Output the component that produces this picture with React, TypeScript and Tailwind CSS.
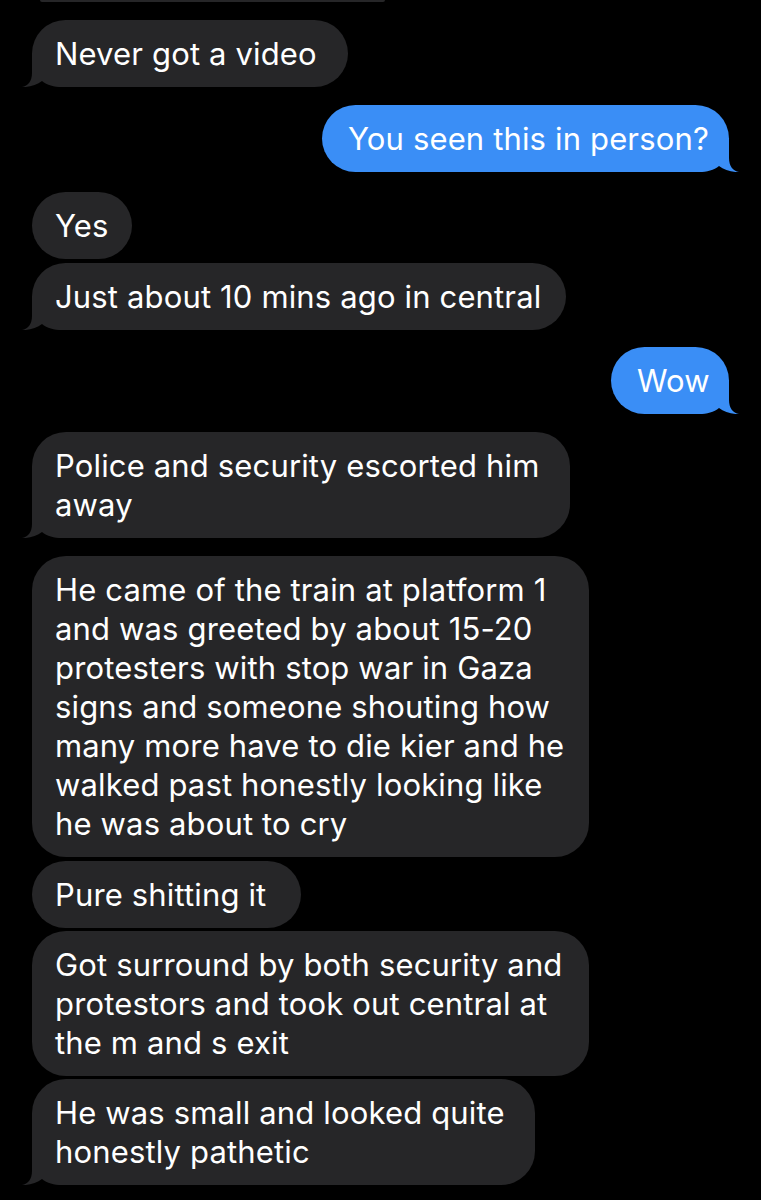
import React from "react";

type Msg = {
  lines: string[];
  me?: boolean;
  tail?: boolean;
  w: string;
  mt: string;
};

const msgs: Msg[] = [
  { lines: ["Never got a video"], tail: true, w: "w-[316px]", mt: "mt-[18px]" },
  { lines: ["You seen this in person?"], me: true, tail: true, w: "w-[407px]", mt: "mt-[18px]" },
  { lines: ["Yes"], w: "w-[100px]", mt: "mt-[20px]" },
  { lines: ["Just about 10 mins ago in central"], tail: true, w: "w-[534px]", mt: "mt-[4px]" },
  { lines: ["Wow"], me: true, tail: true, w: "w-[118px]", mt: "mt-[17px]" },
  { lines: ["Police and security escorted him", "away"], tail: true, w: "w-[538px]", mt: "mt-[18px]" },
  {
    lines: [
      "He came of the train at platform 1",
      "and was greeted by about 15-20",
      "protesters with stop war in Gaza",
      "signs and someone shouting how",
      "many more have to die kier and he",
      "walked past honestly looking like",
      "he was about to cry",
    ],
    w: "w-[557px]",
    mt: "mt-[18px]",
  },
  { lines: ["Pure shitting it"], w: "w-[269px]", mt: "mt-[4px]" },
  {
    lines: [
      "Got surround by both security and",
      "protestors and took out central at",
      "the m and s exit",
    ],
    w: "w-[557px]",
    mt: "mt-[3px]",
  },
  {
    lines: ["He was small and looked quite", "honestly pathetic"],
    tail: true,
    w: "w-[503px]",
    mt: "mt-[3px]",
  },
];

function Tail({ color, right }: { color: string; right?: boolean }) {
  return (
    <svg
      width="46"
      height="34"
      viewBox="-12 -34 46 34"
      className={
        right
          ? "absolute bottom-0 right-[-12px] scale-x-[-1]"
          : "absolute bottom-0 left-[-12px]"
      }
    >
      <path
        d="M0 -34 L0 -14 C0 -6 -4 -1 -10 0 C-3 0.5 5 -2 10 -6 C15 -2 22 0 30 0 L34 0 L34 -34 Z"
        fill={color}
      />
    </svg>
  );
}

function Bubble({ m }: { m: Msg }) {
  const color = m.me ? "#3a8ef6" : "#262628";
  return (
    <div
      className={`relative ${m.w} ${m.mt} ${
        m.me ? "self-end bg-[#3a8ef6] pl-[26px] pr-[18px]" : "self-start bg-[#262628] pl-[23px] pr-[18px]"
      } rounded-[34px] pt-[14px] pb-[14px] text-[31px] leading-[39px] text-white whitespace-nowrap tracking-[0.15px]`}
    >
      {m.tail && <Tail color={color} right={m.me} />}
      <div className="relative">
        {m.lines.map((l, i) => (
          <div key={i}>{l}</div>
        ))}
      </div>
    </div>
  );
}

export default function App() {
  return (
    <div
      className="w-[761px] h-[1200px] overflow-hidden bg-black flex flex-col px-[32px]"
      style={{ fontFamily: "Inter, 'Noto Sans', 'Liberation Sans', sans-serif" }}
    >
      <div className="ml-[8px] w-[345px] h-[2px] rounded-b-full bg-[#262628]" />
      {msgs.map((m, i) => (
        <Bubble key={i} m={m} />
      ))}
    </div>
  );
}
